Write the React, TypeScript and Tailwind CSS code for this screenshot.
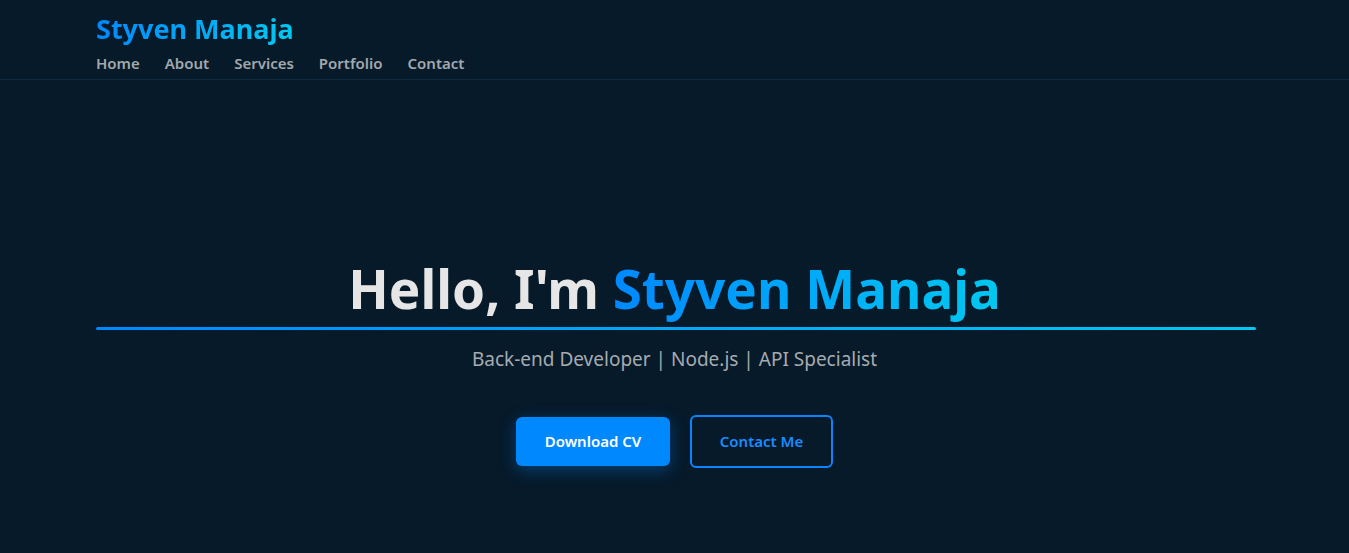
export default function App() {
    const font = {fontFamily: '"Noto Sans", "Open Sans", sans-serif'};
    return (
        <div className="min-h-[553px] w-full bg-[#061a2a] text-white" style={font}>
            <header className="border-b border-[#10283c]">
                <div className="px-[96px] pt-[10px] pb-[5px]">
                    <a className="block text-[27px] font-bold leading-[38px] bg-gradient-to-r from-[#0088ff] to-[#00c8f0] bg-clip-text text-transparent w-max">
                        Styven Manaja
                    </a>
                    <nav className="flex gap-[25px] mt-[4px] text-[15px] font-semibold text-[#a3a8ad] leading-[22px]">
                        <a>Home</a>
                        <a>About</a>
                        <a>Services</a>
                        <a>Portfolio</a>
                        <a>Contact</a>
                    </nav>
                </div>
            </header>
            <section className="px-[96px] pt-[172px] flex flex-col items-center">
                <h1 className="w-full text-center text-[53px] font-bold leading-[74px] text-[#e6e6e6]">
                    Hello, I'm{" "}
                    <span className="bg-gradient-to-r from-[#0088ff] to-[#00c8f0] bg-clip-text text-transparent">Styven Manaja</span>
                </h1>
                <div className="self-start w-[1160px] h-[3px] mt-[1px] bg-gradient-to-r from-[#0088ff] to-[#00c8f0] rounded-full"></div>
                <p className="mt-[14px] text-[19px] text-[#a6abb0] leading-[30px]">
                    Back-end Developer | Node.js | API Specialist
                </p>
                <div className="flex items-center gap-[20px] mt-[41px]">
                    <button className="w-[154px] h-[49px] rounded-[6px] bg-[#0088ff] text-white text-[15px] font-semibold shadow-[0_4px_16px_rgba(0,136,255,0.35)]">
                        Download CV
                    </button>
                    <button className="w-[143px] h-[53px] rounded-[6px] border-2 border-[#0a84ff] text-[#1a8cff] text-[15px] font-semibold">
                        Contact Me
                    </button>
                </div>
            </section>
        </div>
    );
}
